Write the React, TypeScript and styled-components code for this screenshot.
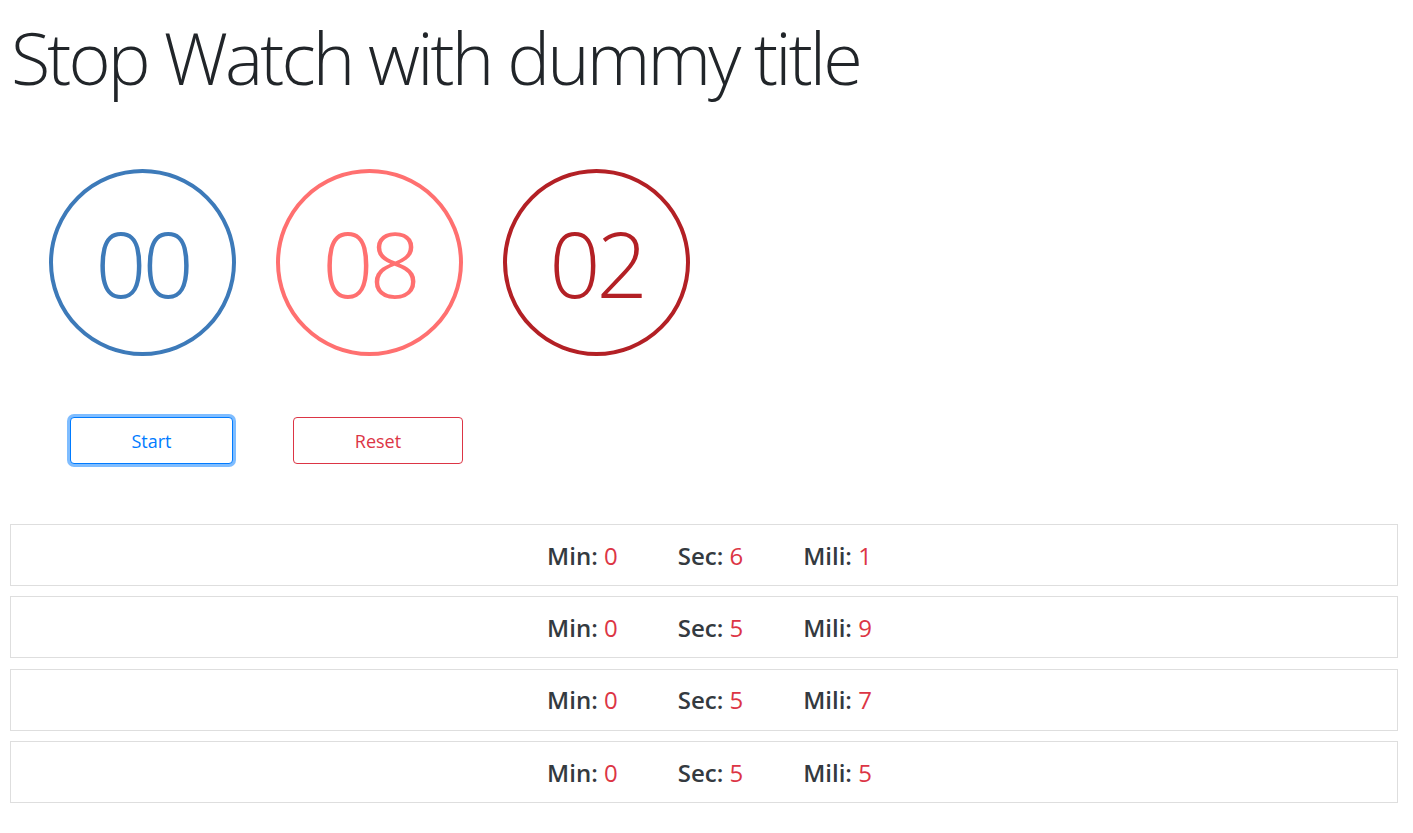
import React from 'react';
import styled, { createGlobalStyle } from 'styled-components';

const GlobalStyle = createGlobalStyle`
  body {
    margin: 0;
    background: #ffffff;
    font-family: 'Open Sans', 'Noto Sans', sans-serif;
    color: #212529;
  }
`;

type Lap = { min: number; sec: number; mili: number };

const laps: Lap[] = [
  { min: 0, sec: 6, mili: 1 },
  { min: 0, sec: 5, mili: 9 },
  { min: 0, sec: 5, mili: 7 },
  { min: 0, sec: 5, mili: 5 },
];

const pad = (n: number) => String(n).padStart(2, '0');

const App: React.FC = () => {
  return (
    <Page>
      <GlobalStyle />
      <Title>Stop Watch with dummy title</Title>

      <Dials>
        <Dial $color="#3d7ab9">{pad(0)}</Dial>
        <Dial $color="#ff7070">{pad(8)}</Dial>
        <Dial $color="#b32025">{pad(2)}</Dial>
      </Dials>

      <Controls>
        <StartButton>Start</StartButton>
        <ResetButton>Reset</ResetButton>
      </Controls>

      <LapList>
        {laps.map((lap, i) => (
          <LapRow key={i}>
            <LapItem>
              Min: <Value>{lap.min}</Value>
            </LapItem>
            <LapItem>
              Sec: <Value>{lap.sec}</Value>
            </LapItem>
            <LapItem>
              Mili: <Value>{lap.mili}</Value>
            </LapItem>
          </LapRow>
        ))}
      </LapList>
    </Page>
  );
};

export default App;

const Page = styled.div`
  padding: 0 15px 0 10px;
`;

const Title = styled.h1`
  margin: 0;
  padding: 14px 0 0 1px;
  font-size: 72px;
  font-weight: 300;
  line-height: 86px;
  letter-spacing: -2.9px;
  color: #212529;
`;

const Dials = styled.div`
  display: flex;
  gap: 40px;
  margin-top: 69px;
  padding-left: 39px;
`;

const Dial = styled.div<{ $color: string }>`
  box-sizing: border-box;
  width: 187px;
  height: 187px;
  border-radius: 50%;
  border: 4px solid ${(p) => p.$color};
  color: ${(p) => p.$color};
  display: flex;
  align-items: center;
  justify-content: center;
  font-size: 90px;
  font-weight: 300;
  letter-spacing: -4px;
`;

const Controls = styled.div`
  display: flex;
  gap: 60px;
  margin-top: 61px;
  padding-left: 60px;
`;

const BaseButton = styled.button`
  box-sizing: border-box;
  height: 47px;
  background: #ffffff;
  border-radius: 4px;
  font-family: 'Open Sans', 'Noto Sans', sans-serif;
  font-size: 18px;
  cursor: pointer;
`;

const StartButton = styled(BaseButton)`
  width: 163px;
  color: #007bff;
  border: 1px solid #007bff;
  box-shadow: 0 0 0 3px rgba(0, 123, 255, 0.5);
`;

const ResetButton = styled(BaseButton)`
  width: 170px;
  color: #dc3545;
  border: 1px solid #dc3545;
`;

const LapList = styled.div`
  display: flex;
  flex-direction: column;
  gap: 10.4px;
  margin-top: 60px;
`;

const LapRow = styled.div`
  box-sizing: border-box;
  height: 62px;
  border: 1px solid #dedede;
  display: flex;
  align-items: center;
  justify-content: center;
  gap: 60px;
  padding-left: 11px;
  font-size: 24px;
  font-weight: 600;
  color: #343a40;
`;

const LapItem = styled.span`
  white-space: pre;
`;

const Value = styled.span`
  color: #dc3545;
  font-weight: 500;
`;
